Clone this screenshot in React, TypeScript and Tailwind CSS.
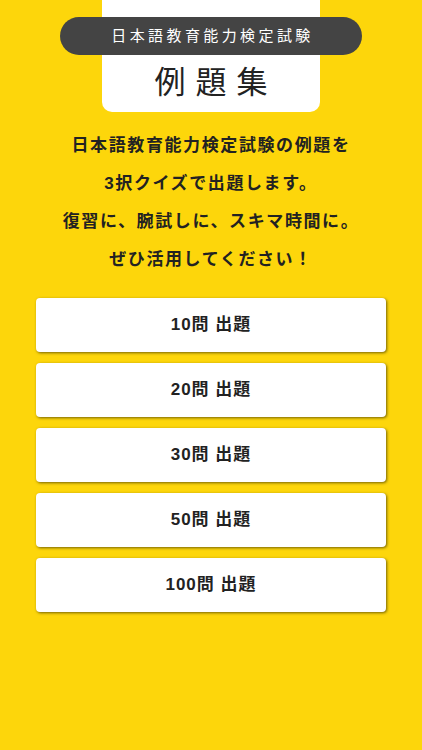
const counts = [10, 20, 30, 50, 100]

const lines = [
  '日本語教育能力検定試験の例題を',
  '3択クイズで出題します。',
  '復習に、腕試しに、スキマ時間に。',
  'ぜひ活用してください！',
]

export default function App() {
  return (
    <div
      className="min-h-[750px] w-full bg-[#fdd60b] flex flex-col items-center"
      style={{ fontFamily: '"Liberation Sans", "Noto Sans CJK JP", sans-serif' }}
    >
      {/* タイトルカード */}
      <div className="w-[218px] h-[112px] bg-white rounded-b-[10px] flex flex-col items-center pt-[17px]">
        <div className="shrink-0 w-[302px] h-[38px] rounded-full bg-[#444444] flex items-center justify-center text-white text-[15px] tracking-[3.4px] pl-[3px]">
          日本語教育能力検定試験
        </div>
        <div className="mt-[5px] text-[31px] leading-[46px] tracking-[10px] pl-[10px] font-normal text-[#222]">
          例題集
        </div>
      </div>

      {/* 説明 */}
      <div className="mt-[15px] flex flex-col items-center text-[17px] leading-[38px] font-bold text-[#222] tracking-[1.6px]">
        {lines.map((l) => (
          <p key={l}>{l}</p>
        ))}
      </div>

      {/* ボタン */}
      <div className="mt-[19px] w-[350px] flex flex-col gap-[11px]">
        {counts.map((n) => (
          <button
            key={n}
            className="h-[54px] w-full bg-white rounded-[4px] shadow-[1px_1px_3px_rgba(0,0,0,0.55)] text-[17px] font-bold text-[#222] tracking-[1px]"
          >
            {n}問 出題
          </button>
        ))}
      </div>
    </div>
  )
}
